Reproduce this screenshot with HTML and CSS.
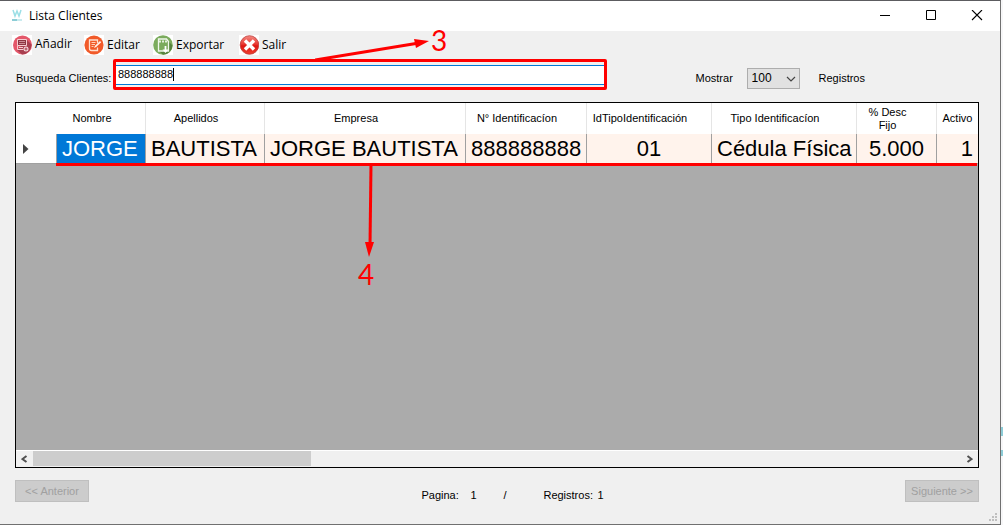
FILE: index.html
```html
<!DOCTYPE html>
<html lang="es">
<head>
<meta charset="utf-8">
<title>Lista Clientes</title>
<link rel="stylesheet" href="styles.css">
</head>
<body>
<div class="window">
  <header class="titlebar">
    <svg class="app-icon" width="12" height="14" viewBox="0 0 12 14"><path d="M2 1l2 6 2-5 2 5 2-6" fill="none" stroke="#9bdfe6" stroke-width="1.5"/><path d="M1 11h5" stroke="#8ccdd6" stroke-width="2"/><path d="M6 11h5" stroke="#c9ebef" stroke-width="2"/></svg>
    <h1 class="title">Lista Clientes</h1>
    <div class="window-buttons">
      <button class="window-button" aria-label="Minimizar"><svg width="12" height="12" viewBox="0 0 12 12"><path d="M1 5.500h10" stroke="#000"/></svg></button>
      <button class="window-button" aria-label="Maximizar"><svg width="12" height="12" viewBox="0 0 12 12"><path d="M1.500 .500h9v9h-9z" fill="none" stroke="#000"/></svg></button>
      <button class="window-button" aria-label="Cerrar"><svg width="12" height="12" viewBox="0 0 12 12"><path d="M1 0l10 10M11 0L1 10" stroke="#000" stroke-width="1.100"/></svg></button>
    </div>
  </header>

  <nav class="toolbar">
    <button class="tool tool-add">
      <svg class="tool-icon" viewBox="0 0 20 20"><path fill="#fff" d="M0 0h20v20H0z"/><circle cx="10.500" cy="10" r="9.500" fill="#e4576a"/><path d="M15 5l4.500 4.500A10 10 0 0 1 10 19.500L5 15z" fill="#a83f50"/><path d="M5.500 4.500h9v6h-9z" fill="#8e3543" stroke="#f6ccd1"/><path d="M7 6.500h6M7 8.500h6" stroke="#c98a93"/><path d="M5.500 10.500v4h6M7 12.500h4" fill="none" stroke="#f6ccd1"/><circle cx="14" cy="14" r="2.500" fill="#f6dadd"/><path d="M12.500 14h3M14 12.500v3" stroke="#a83f50"/></svg>
      <span>Añadir</span>
    </button>
    <button class="tool tool-edit">
      <svg class="tool-icon" viewBox="0 0 20 20"><path fill="#fff" d="M0 0h20v20H0z"/><circle cx="10" cy="10" r="9.600" fill="#f15a29"/><path d="M13.500 8V5H5.500v8.500q0 2 2 2h6v-3" fill="none" stroke="#ffe0cf" stroke-width="1.300"/><path d="M7.500 7.500h4M7.500 9.500h3.500M7.500 11.500h2" stroke="#ffd0b8"/><path d="M10 13l1-2.300 5-4.700 1.200 1.200-5 4.800z" fill="#fff2ea"/></svg>
      <span>Editar</span>
    </button>
    <button class="tool tool-export">
      <svg class="tool-icon" viewBox="0 0 20 20"><path fill="#fff" d="M0 0h20v20H0z"/><circle cx="10" cy="10" r="9.800" fill="#7bab5d"/><path d="M15 6l4.500 4.500A10 10 0 0 1 10 19.800L6 16z" fill="#56833f"/><path d="M5.500 4h8l2 2.500V16h-10z" fill="#7bab5d" stroke="#f0f7eb" stroke-width="1.300"/><path d="M6 6.500h9" stroke="#e5f0de" stroke-width="2" stroke-dasharray="2 1"/><path d="M12.500 11v5" stroke="#fff" stroke-width="1.800"/><path d="M9.500 14.500h6l-3 3.500z" fill="#fff"/></svg>
      <span>Exportar</span>
    </button>
    <button class="tool tool-exit">
      <svg class="tool-icon" viewBox="0 0 20 20"><defs><linearGradient id="exit-red" x1="0" y1="0" x2="0" y2="1"><stop offset="0" stop-color="#f58a83"/><stop offset=".45" stop-color="#e83a33"/><stop offset=".55" stop-color="#dc1713"/><stop offset="1" stop-color="#f0402f"/></linearGradient></defs><path fill="#fff" d="M0 0h20v20H0z"/><circle cx="10.500" cy="10" r="9.300" fill="url(#exit-red)" stroke="#bd3a37" stroke-width=".8"/><path d="M6 5.500l9 9M15 5.500l-9 9" stroke="#fff" stroke-width="3.400"/></svg>
      <span>Salir</span>
    </button>
  </nav>

  <section class="filters">
    <label class="search-label" for="search">Busqueda Clientes:</label>
    <div class="search">
      <input class="search-input" id="search" type="text" value="888888888">
      <span class="caret"></span>
      <svg class="callout callout-search" width="120" height="26" viewBox="0 0 120 26"><path d="M0 23L104 6" stroke="#f00" stroke-width="3"/><path d="M99 2l15 2-13 7z" fill="#f00"/></svg>
      <span class="callout-number callout-three">3</span>
    </div>
    <label class="show-label" for="page-size">Mostrar</label>
    <div class="select-box">
      <select class="page-size" id="page-size"><option>100</option></select>
      <svg class="chevron" width="10" height="6" viewBox="0 0 10 6"><path d="M1 1l4 4 4-4" fill="none" stroke="#444" stroke-width="1.200"/></svg>
    </div>
    <span class="records-label">Registros</span>
  </section>

  <main class="grid">
    <table class="clients">
      <colgroup><col class="col-marker"><col class="col-name"><col class="col-surname"><col class="col-company"><col class="col-id"><col class="col-idtype"><col class="col-type"><col class="col-discount"><col></colgroup>
      <thead>
        <tr><th></th><th>Nombre</th><th>Apellidos</th><th>Empresa</th><th>N° Identificacíon</th><th>IdTipoIdentificación</th><th>Tipo Identificacíon</th><th>% Desc<br>Fijo</th><th>Activo</th></tr>
      </thead>
      <tbody>
        <tr><td class="marker"><svg width="6" height="10" viewBox="0 0 6 10"><path d="M0 0l5.500 5L0 10z" fill="#444"/></svg></td><td class="selected">JORGE</td><td>BAUTISTA</td><td>JORGE BAUTISTA</td><td>888888888</td><td class="center">01</td><td>Cédula Física</td><td class="center">5.000</td><td class="right">1</td></tr>
      </tbody>
    </table>
    <div class="underline"></div>
    <svg class="callout callout-row" width="12" height="94" viewBox="0 0 12 94"><path d="M7 0L6 82" stroke="#f00" stroke-width="3"/><path d="M1 78h9L5 93z" fill="#f00"/></svg>
    <span class="callout-number callout-four">4</span>
    <div class="scrollbar">
      <button class="scroll-button" aria-label="Desplazar a la izquierda"><svg width="7" height="8" viewBox="0 0 7 8"><path d="M5.500 1l-4 3 4 3" fill="none" stroke="#505050" stroke-width="2"/></svg></button>
      <div class="track"><div class="thumb"></div></div>
      <button class="scroll-button" aria-label="Desplazar a la derecha"><svg width="7" height="8" viewBox="0 0 7 8"><path d="M1.500 1l4 3-4 3" fill="none" stroke="#505050" stroke-width="2"/></svg></button>
    </div>
  </main>

  <footer class="pager">
    <button class="page-button" disabled>&lt;&lt; Anterior</button>
    <div class="page-info">
      <span class="page-key">Pagina:</span><span class="page-value">1</span><span class="page-slash">/</span><span class="total-key">Registros:</span><span>1</span>
    </div>
    <button class="page-button" disabled>Siguiente &gt;&gt;</button>
  </footer>
  <svg class="grip" width="9" height="9" viewBox="0 0 9 9"><path d="M6 0h2v2H6zM3 3h2v2H3zM6 3h2v2H6zM0 6h2v2H0zM3 6h2v2H3zM6 6h2v2H6z" fill="#bfbfbf"/></svg>
</div>
</body>
</html>
```
FILE: styles.css
```css
* { box-sizing: border-box; }

body {
  margin: 0;
  padding-right: 2px;
  background: linear-gradient(transparent 427px, #8ccbd6 427px 436px, transparent 436px 450px, #8ccbd6 450px 456px, transparent 456px) #f7f7f8;
  font: 11px/13px "Liberation Sans", Arial, sans-serif;
  color: #000;
}

button, input, select { font: inherit; color: inherit; }

.window {
  position: relative;
  display: flex;
  flex-direction: column;
  min-height: 100vh;
  background: #f0f0f0;
  border: 1px solid #707070;
  border-left: 0;
  border-top-color: #5c5c60;
}

.titlebar {
  display: flex;
  align-items: center;
  height: 30px;
  padding-left: 11px;
  background: #fff;
}

.title {
  margin: 0 0 0 6px;
  font: 12px/16px "Open Sans", "Noto Sans", sans-serif;
}

.window-buttons { display: flex; margin-left: auto; }

.window-button {
  display: flex;
  align-items: center;
  justify-content: center;
  width: 46px;
  height: 30px;
  padding: 0;
  border: 0;
  background: none;
}

.toolbar {
  display: flex;
  height: 28px;
  padding: 4px 12px 0;
}

.tool {
  display: flex;
  align-items: center;
  gap: 3px;
  height: 20px;
  padding: 0;
  border: 0;
  background: none;
  font: 12px/20px "Open Sans", "Noto Sans", sans-serif;
  white-space: nowrap;
}

.tool-icon { width: 20px; height: 20px; flex: none; }
.tool-add { width: 72px; }
.tool-add span { padding-bottom: 3px; line-height: 17px; }
.tool-edit { width: 69px; }
.tool-export { width: 86px; }

.filters {
  display: flex;
  align-items: center;
  height: 31px;
  margin-right: 135px;
  padding-left: 16px;
}

.search-label { width: 97px; padding-top: 8px; white-space: nowrap; }

.search {
  position: relative;
  flex: 1;
  height: 31px;
  padding: 3px 0;
  border: 3px solid #f00;
  border-radius: 2px;
}

.search-input {
  display: block;
  width: 100%;
  height: 20px;
  padding: 0 2px 2px;
  border: solid #0078d7;
  border-width: 1px 0;
  border-radius: 0;
  outline: 0;
  background: #fff;
}

.caret {
  position: absolute;
  left: 57px;
  top: 6px;
  width: 1px;
  height: 13px;
  background: #000;
}

.callout { position: absolute; }
.callout-search { left: 199px; bottom: 24px; }

.callout-number {
  position: absolute;
  font: 28px/30px Lato, "Open Sans", sans-serif;
  color: #f00;
}

.callout-three { left: 315px; bottom: 32px; }

.show-label { margin-left: 89px; width: 51px; padding-top: 8px; }

.select-box { position: relative; width: 53px; margin-top: 8px; }

.page-size {
  display: block;
  appearance: none;
  width: 100%;
  height: 21px;
  padding: 0 4px;
  border: 1px solid #adadad;
  border-radius: 0;
  background: #e1e1e1;
  font-size: 12px;
}

.chevron { position: absolute; right: 4px; top: 8px; pointer-events: none; }
.records-label { margin-left: 19px; padding-top: 8px; }

.grid {
  position: relative;
  display: flex;
  flex: 1;
  flex-direction: column;
  margin: 12px 21px 12px 15px;
  border: 1px solid #000;
  background: #ababab;
}

.clients {
  width: 100%;
  table-layout: fixed;
  border-collapse: separate;
  border-spacing: 0;
}

.col-marker { width: 41px; }
.col-name { width: 89px; }
.col-surname { width: 119px; }
.col-company { width: 201px; }
.col-id { width: 121px; }
.col-idtype { width: 125px; }
.col-type { width: 145px; }
.col-discount { width: 80px; }

.clients th {
  height: 31px;
  padding: 0 18px 0 0;
  border-right: 1px solid #e5e5e5;
  background: #fff;
  font-weight: normal;
  white-space: nowrap;
}

.clients th:first-child { border-right: 0; }
.clients th:last-child { padding: 0; border-right: 0; }

.clients td {
  height: 30px;
  padding: 0 5px;
  border-right: 1px solid #a0a0a0;
  border-bottom: 1px solid #a0a0a0;
  background: #fff3ec;
  font-size: 22px;
  line-height: 28px;
  white-space: nowrap;
}

.clients td:last-child { border-right: 0; }
.clients .marker { padding: 0 7px; background: #fff; line-height: 0; }
.clients .selected { background: #0078d7; color: #fff; }
.clients .center { text-align: center; }
.clients .right { text-align: right; }

.underline {
  position: absolute;
  left: 40px;
  right: 1px;
  top: 60px;
  height: 3px;
  background: #f00;
}

.callout-row { left: 348px; top: 61px; }
.callout-four { left: 342px; top: 156px; }

.scrollbar {
  display: flex;
  height: 17px;
  margin-top: auto;
  border-top: 1px solid #fff;
  background: #f0f0f0;
}

.scroll-button {
  display: flex;
  align-items: center;
  justify-content: center;
  width: 17px;
  padding: 0;
  border: 0;
  background: none;
}

.track { flex: 1; }
.thumb { width: 30%; height: 15px; background: #cdcdcd; }

.pager {
  display: flex;
  justify-content: space-between;
  margin: 0 21px 22px 15px;
}

.page-button {
  width: 74px;
  height: 22px;
  padding: 0;
  border: 1px solid #bfbfbf;
  background: #ccc;
  color: #a0a0a0;
}

.page-info { display: flex; margin-left: 31px; padding-top: 9px; }
.page-key { width: 49px; }
.page-value { width: 33px; }
.page-slash { width: 40px; }
.total-key { width: 54px; }

.grip { position: absolute; right: 2px; bottom: 2px; }
```
